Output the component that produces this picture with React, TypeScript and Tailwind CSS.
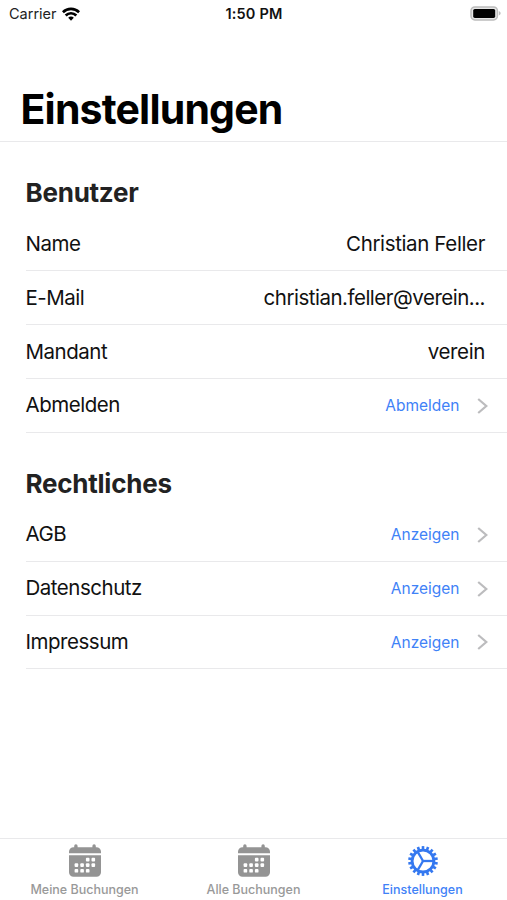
import clsx from "clsx";

type Row = { label: string; value?: string; action?: string; valueClass?: string };

const USER_ROWS: Row[] = [
  { label: "Name", value: "Christian Feller" },
  { label: "E-Mail", value: "christian.feller@verein...", valueClass: "tracking-[-0.5px]" },
  { label: "Mandant", value: "verein" },
  { label: "Abmelden", action: "Abmelden" },
];

const LEGAL_ROWS: Row[] = [
  { label: "AGB", action: "Anzeigen" },
  { label: "Datenschutz", action: "Anzeigen" },
  { label: "Impressum", action: "Anzeigen" },
];

const GEAR_TEETH = Array.from({ length: 18 }, (_, i) => i * 20 + 10);

const CALENDAR_DOTS = [
  [19.7, 15.6],
  [25.3, 15.6],
  [8.4, 21.1],
  [14.1, 21.1],
  [19.7, 21.1],
  [25.3, 21.1],
  [8.4, 26.8],
  [14.1, 26.8],
  [19.7, 26.8],
];

function WifiIcon() {
  return (
    <svg width="18" height="14" viewBox="0 0 18 14" fill="none" stroke="#000" strokeWidth="2.7">
      <path d="M0.9 5.2a11.6 11.6 0 0 1 16.2 0" />
      <path d="M3.7 8.5a7.4 7.4 0 0 1 10.6 0" />
      <path d="M6.2 10.8a3.9 3.9 0 0 1 5.6 0L9 13.7Z" fill="#000" stroke="none" />
    </svg>
  );
}

function BatteryIcon() {
  return (
    <svg width="31" height="15" viewBox="0 0 31 15">
      <rect x="1" y="0.9" width="26.4" height="13" rx="3.8" fill="#e6e6e6" stroke="#bcbcbc" strokeWidth="1.5" />
      <rect x="3.2" y="2.9" width="22" height="9" rx="1.6" fill="#000" />
      <path d="M28.8 5v4.6c1.2-.5 1.8-1.3 1.8-2.3s-.6-1.8-1.8-2.3Z" fill="#bcbcbc" />
    </svg>
  );
}

function CalendarIcon() {
  return (
    <svg width="34" height="34" viewBox="0 0 34 34" fill="#949494">
      <path d="M1 9.3V7.8a4.5 4.5 0 0 1 4.5-4.5H6.2V2a1.7 1.7 0 0 1 3.4 0v1.3h14.8V2a1.7 1.7 0 0 1 3.4 0v1.3h.7A4.5 4.5 0 0 1 33 7.800v1.500Z" />
      <path d="M1 11.3h32v17a4.5 4.5 0 0 1-4.5 4.5h-23A4.5 4.5 0 0 1 1 28.3Z" />
      {CALENDAR_DOTS.map(([x, y]) => (
        <rect key={`${x}-${y}`} x={x - 1.8} y={y - 1.8} width="3.6" height="3.6" rx="0.9" fill="#fff" />
      ))}
    </svg>
  );
}

function GearIcon() {
  return (
    <svg width="32" height="32" viewBox="-16 -16 32 32" fill="none" stroke="#3478f0">
      <circle r="10.9" strokeWidth="2.8" />
      {GEAR_TEETH.map((angle) => (
        <path key={angle} d="M11.5 0H14.9" strokeWidth="2.6" transform={`rotate(${angle})`} />
      ))}
      {[0, 120, 240].map((angle) => (
        <path key={angle} d="M0 0H10" strokeWidth="2.3" transform={`rotate(${angle})`} />
      ))}
    </svg>
  );
}

function SettingsRow({ label, value, action, valueClass = "tracking-[-0.37px]" }: Row) {
  return (
    <li className="flex h-[53.8px] items-center justify-between border-b border-[#e9e9eb] pt-[1px] pr-[22px] text-[20.5px] text-[#111]">
      <span className="-ml-[0.5px] tracking-[-0.48px]">{label}</span>
      {value && <span className={valueClass}>{value}</span>}
      {action && (
        <button className="-mr-[3px] flex items-center text-[15.5px] text-[#3f82f7]">
          {action}
          <svg className="ml-[17.5px]" width="11" height="16" viewBox="0 0 11 16" fill="none" stroke="#bcbcbe" strokeWidth="2.2">
            <path d="M1.2 1 9.3 8 1.2 15" />
          </svg>
        </button>
      )}
    </li>
  );
}

function SettingsSection({ title, rows }: { title: string; rows: Row[] }) {
  return (
    <section className="pl-[26px]">
      <h2 className="-ml-[0.5px] flex h-[75.4px] items-end pb-[8px] text-[26px] leading-[32px] font-bold tracking-[-0.25px] text-[#222]">
        {title}
      </h2>
      <ul>
        {rows.map((row) => (
          <SettingsRow key={row.label} {...row} />
        ))}
      </ul>
    </section>
  );
}

const TABS = [
  { label: "Meine Buchungen", Icon: CalendarIcon, active: false },
  { label: "Alle Buchungen", Icon: CalendarIcon, active: false },
  { label: "Einstellungen", Icon: GearIcon, active: true },
];

export default function App() {
  return (
    <div className="flex h-[900px] w-full flex-col overflow-hidden bg-white font-['Inter','Liberation_Sans',sans-serif]">
      <header className="flex h-[141.5px] flex-col justify-between border-b border-[#e9e9eb]">
        <div className="grid h-[27px] grid-cols-3 items-center pr-[6px] pl-[9px] text-[14.5px]">
          <div className="flex items-center gap-[5px] text-[#222]">
            <span>Carrier</span>
            <WifiIcon />
          </div>
          <span className="-ml-[2px] text-center font-semibold tracking-[0.2px] text-[#111]">1:50 PM</span>
          <div className="flex justify-end">
            <BatteryIcon />
          </div>
        </div>
        <h1 className="pb-[8px] pl-[20.5px] text-[41px] leading-[48px] font-bold tracking-[-0.82px] text-black">
          Einstellungen
        </h1>
      </header>

      <main className="flex-1 pt-[0.5px]">
        <SettingsSection title="Benutzer" rows={USER_ROWS} />
        <SettingsSection title="Rechtliches" rows={LEGAL_ROWS} />
      </main>

      <nav className="grid h-[62px] grid-cols-3 border-t border-[#e9e9eb]">
        {TABS.map(({ label, Icon, active }) => (
          <button
            key={label}
            className={clsx(
              "flex flex-col items-center pt-[5px] text-[12.5px] font-medium",
              active ? "text-[#3f82f7]" : "text-[#999]",
            )}
          >
            <span className="flex h-[34px] items-center">
              <Icon />
            </span>
            <span className="mt-[4px] leading-[16px]">{label}</span>
          </button>
        ))}
      </nav>
    </div>
  );
}
